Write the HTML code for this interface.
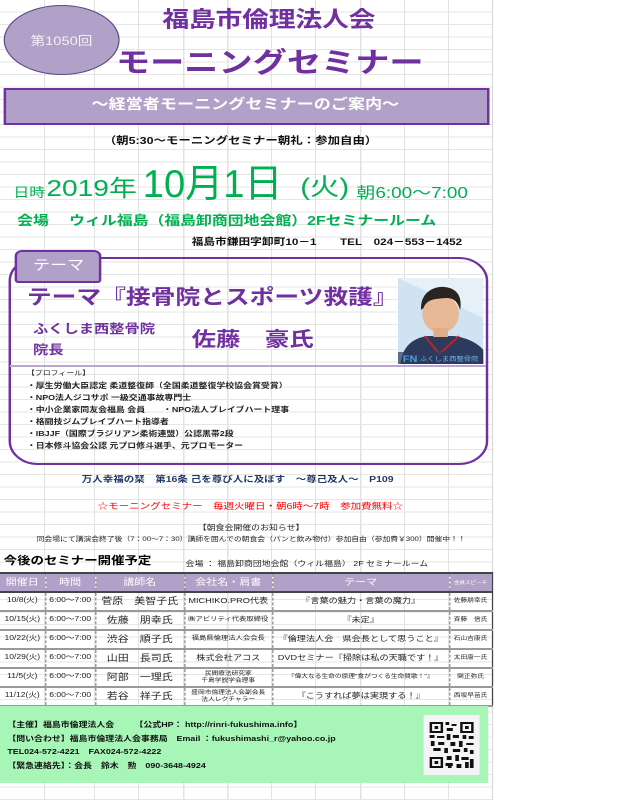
<!DOCTYPE html>
<html><head><meta charset="utf-8">
<style>
html,body{margin:0;padding:0;background:#fff;width:641px;height:800px;overflow:hidden}
#w{position:absolute;left:0;top:0;width:525px;height:800px;transform:scaleX(1.2206);transform-origin:0 0;font-family:"Liberation Sans","Noto Sans CJK JP",sans-serif;}
#grid{position:absolute;left:0;top:0;width:403px;height:800px;border-right:1px solid #d8d8d8;
background-image:
linear-gradient(to right,transparent 36px,#e2e2e2 36px,#e2e2e2 37px,transparent 37px),
linear-gradient(to right,transparent 77px,#e2e2e2 77px,#e2e2e2 78px,transparent 78px),
linear-gradient(to right,transparent 113px,#e2e2e2 113px,#e2e2e2 114px,transparent 114px),
linear-gradient(to right,transparent 150px,#e2e2e2 150px,#e2e2e2 151px,transparent 151px),
linear-gradient(to right,transparent 186px,#e2e2e2 186px,#e2e2e2 187px,transparent 187px),
linear-gradient(to right,transparent 222px,#e2e2e2 222px,#e2e2e2 223px,transparent 223px),
linear-gradient(to right,transparent 258px,#e2e2e2 258px,#e2e2e2 259px,transparent 259px),
linear-gradient(to right,transparent 295px,#e2e2e2 295px,#e2e2e2 296px,transparent 296px),
linear-gradient(to right,transparent 331px,#e2e2e2 331px,#e2e2e2 332px,transparent 332px),
linear-gradient(to right,transparent 367px,#e2e2e2 367px,#e2e2e2 368px,transparent 368px),
repeating-linear-gradient(to bottom,transparent 0,transparent 11.5px,#e6e6e6 11.5px,#e6e6e6 12.5px);}
.a{position:absolute;white-space:nowrap;line-height:1}
.p{color:#7030a0;font-weight:bold}
.g{color:#00b050}
table{position:absolute;left:0;top:572px;width:403px;border-collapse:collapse;table-layout:fixed;font-size:7px;color:#222}
td{border-left:1px dashed #888;text-align:center;padding:0;white-space:nowrap;overflow:hidden;height:17px;border-bottom:2px solid #999;line-height:1.15}
tr.h td{background:#b1a0c7;color:#fff;font-size:9px;height:17px;border-bottom:2px solid #444}
td:first-child{border-left:none}
td:last-child{border-right:1px solid #444}
</style></head><body>
<div id="w">
<div id="grid"></div>

<div style="position:absolute;left:3px;top:5px;width:93px;height:68px;border-radius:50%;background:#b1a0c7;border:1px solid #5c4a85"></div>
<div class="a" style="left:25px;top:35px;font-size:12px;color:#f4f0f8">第1050回</div>

<div class="a p" style="left:133px;top:9px;font-size:22px;letter-spacing:-0.2px">福島市倫理法人会</div>
<div class="a p" style="left:95px;top:49px;font-size:28px">モーニングセミナー</div>

<div style="position:absolute;left:3px;top:88px;width:394px;height:33px;background:#b1a0c7;border:2px solid #7030a0"></div>
<div class="a" style="left:75px;top:97px;font-size:14px;font-weight:bold;color:#fff">～経営者モーニングセミナーのご案内～</div>

<div class="a" style="left:85px;top:137px;font-size:10.2px;font-weight:bold;color:#111">（朝5:30～モーニングセミナー朝礼：参加自由）</div>

<div class="a g" style="left:11px;top:186px;font-size:13px">日時</div>
<div class="a g" style="left:38px;top:177px;font-size:23px">2019年</div>
<div class="a g" style="left:117px;top:165px;font-size:39px;transform:scaleX(0.8);transform-origin:0 0">10月1日</div>
<div class="a g" style="left:246px;top:176px;font-size:24px">(火)</div>
<div class="a g" style="left:292px;top:186px;font-size:15.5px">朝6:00～7:00</div>

<div class="a g" style="left:14px;top:214px;font-size:13px;font-weight:bold">会場　 ウィル福島（福島卸商団地会館）2Fセミナールーム</div>
<div class="a" style="left:157px;top:238px;font-size:9.6px;font-weight:bold;color:#111">福島市鎌田字卸町10－1　　TEL　024－553－1452</div>

<div style="position:absolute;left:7px;top:257px;width:389px;height:204px;border:2px solid #7030a0;border-radius:24px"></div>
<div style="position:absolute;left:12px;top:250px;width:67px;height:29px;background:#b1a0c7;border:2px solid #7030a0;border-radius:6px 6px 3px 3px"></div>
<div class="a" style="left:27px;top:258px;font-size:14px;color:#fff">テーマ</div>

<div class="a p" style="left:22px;top:288px;font-size:20.3px">テーマ『接骨院とスポーツ救護』</div>
<div class="a p" style="left:27px;top:323px;font-size:12.5px;font-weight:600">ふくしま西整骨院</div>
<div class="a p" style="left:27px;top:344px;font-size:12.5px;font-weight:600">院長</div>
<div class="a p" style="left:157px;top:330px;font-size:20px">佐藤　豪氏</div>

<svg style="position:absolute;left:326px;top:278px" width="70" height="86" viewBox="0 0 70 86">
<rect width="70" height="86" fill="#cfe3f2"/>
<path d="M0 0L70 40V0Z" fill="#e6f0f8"/>
<path d="M2 86 C4 66 14 60 24 58 L46 58 C58 60 66 66 70 72 V86Z" fill="#2d3a5e"/>
<path d="M22 58 L34 76 L50 58" fill="none" stroke="#d02020" stroke-width="1.5"/>
<ellipse cx="35" cy="36" rx="15" ry="19" fill="#e8b896"/>
<path d="M19 32 C18 14 30 8 38 9 C48 10 53 18 51 32 C49 24 46 20 40 20 C32 21 24 20 21 30Z" fill="#2a2420"/>
<rect x="29" y="50" width="12" height="9" fill="#e0ad8a"/>
<rect x="0" y="74" width="70" height="12" fill="#2d3a5e" opacity="0.7"/>
<text x="4" y="84" font-size="9" font-weight="bold" fill="#4aa0e0" font-family="Liberation Sans">FN</text>
<text x="18" y="83" font-size="6" fill="#6ab8f0" font-family="Noto Sans CJK JP">ふくしま西整骨院</text>
</svg>

<div style="position:absolute;left:8px;top:365px;width:390px;height:2px;background:#b9a6d4"></div>
<div class="a" style="left:22px;top:371px;font-size:6.5px;color:#222">【プロフィール】</div>
<div style="position:absolute;left:22px;top:380px;font-size:7.3px;font-weight:bold;color:#222;line-height:11.9px;white-space:nowrap">
・厚生労働大臣認定 柔道整復師（全国柔道整復学校協会賞受賞）<br>
・NPO法人ジコサポ 一級交通事故専門士<br>
・中小企業家同友会福島 会員　　・NPO法人ブレイブハート理事<br>
・格闘技ジムブレイブハート指導者<br>
・IBJJF（国際ブラジリアン柔術連盟）公認黒帯2段<br>
・日本修斗協会公認 元プロ修斗選手、元プロモーター</div>

<div class="a" style="left:67px;top:475px;font-size:8.6px;font-weight:bold;color:#203864">万人幸福の栞　第16条 己を尊び人に及ぼす　～尊己及人～　P109</div>
<div class="a" style="left:80px;top:502px;font-size:8.6px;color:#ff0000">☆モーニングセミナー　毎週火曜日・朝6時～7時　参加費無料☆</div>

<div class="a" style="left:162px;top:524px;font-size:7.3px;color:#222">【朝食会開催のお知らせ】</div>
<div class="a" style="left:30px;top:537px;font-size:6.4px;color:#222">同会場にて講演会終了後（7：00～7：30）講師を囲んでの朝食会（パンと飲み物付）参加自由（参加費￥300）開催中！！</div>

<div class="a" style="left:3px;top:556px;font-size:11px;font-weight:bold;color:#000">今後のセミナー開催予定</div>
<div class="a" style="left:152px;top:560px;font-size:7.3px;color:#222">会場 ： 福島卸商団地会館（ウィル福島） 2F セミナールーム</div>

<table>
<colgroup><col style="width:37px"><col style="width:41px"><col style="width:73px"><col style="width:72px"><col style="width:145px"><col style="width:35px"></colgroup>
<tr class="h" style="border-top:2px solid #444"><td>開催日</td><td>時間</td><td>講師名</td><td>会社名・肩書</td><td>テーマ</td><td style="font-size:4.5px">会員スピーチ</td></tr>
<tr><td>10/8(火)</td><td>6:00～7:00</td><td style="font-size:9px">菅原　美智子氏</td><td style="font-size:7.5px">MICHIKO.PRO代表</td><td style="font-size:7.5px">『言葉の魅力・言葉の魔力』</td><td style="font-size:5.5px">佐藤朋幸氏</td></tr>
<tr><td>10/15(火)</td><td>6:00～7:00</td><td style="font-size:9px">佐藤　朋幸氏</td><td style="font-size:6px">㈱アビリティ代表取締役</td><td style="font-size:7.5px">『未定』</td><td style="font-size:5.5px">斉藤　信氏</td></tr>
<tr><td>10/22(火)</td><td>6:00～7:00</td><td style="font-size:9px">渋谷　順子氏</td><td style="font-size:6px">福島県倫理法人会会長</td><td style="font-size:7.5px">『倫理法人会　県会長として思うこと』</td><td style="font-size:5.5px">石山吉康氏</td></tr>
<tr><td>10/29(火)</td><td>6:00～7:00</td><td style="font-size:9px">山田　長司氏</td><td style="font-size:7.5px">株式会社アコス</td><td style="font-size:7.5px">DVDセミナー『掃除は私の天職です！』</td><td style="font-size:5.5px">太田康一氏</td></tr>
<tr><td>11/5(火)</td><td>6:00～7:00</td><td style="font-size:9px">阿部　一理氏</td><td style="font-size:5.5px;line-height:1.25">民間療法研究家<br>千島学説学会理事</td><td style="font-size:5.5px">『偉大なる生命の原理"食がつくる生命賛歌！"』</td><td style="font-size:5.5px">関正弥氏</td></tr>
<tr><td>11/12(火)</td><td>6:00～7:00</td><td style="font-size:9px">若谷　祥子氏</td><td style="font-size:5.5px;line-height:1.25">盛岡市倫理法人会副会長<br>法人レクチャラー</td><td style="font-size:7.5px">『こうすれば夢は実現する！』</td><td style="font-size:5.5px">西坂早苗氏</td></tr>
</table>

<div style="position:absolute;left:0;top:706px;width:400px;height:77px;background:#a8f5b8"></div>
<div style="position:absolute;left:6px;top:718px;font-size:7.3px;font-weight:bold;color:#111;line-height:13.6px;white-space:nowrap">
【主催】福島市倫理法人会　　 【公式HP： http://rinri-fukushima.info】<br>
【問い合わせ】福島市倫理法人会事務局　Email ：fukushimashi_r@yahoo.co.jp<br>
TEL024-572-4221　FAX024-572-4222<br>
【緊急連絡先】：会長　鈴木　勲　090-3648-4924</div>

<svg style="position:absolute;left:347px;top:715px" width="46" height="60" viewBox="0 0 46 60">
<rect width="46" height="60" fill="#f4f4f4"/>
<g fill="#111">
<path d="M5 7h11v11H5zM7 9v7h7V9z" fill-rule="evenodd"/><rect x="9" y="11" width="3" height="3"/>
<path d="M30 7h11v11H30zM32 9v7h7V9z" fill-rule="evenodd"/><rect x="34" y="11" width="3" height="3"/>
<path d="M5 42h11v11H5zM7 44v7h7v-7z" fill-rule="evenodd"/><rect x="9" y="46" width="3" height="3"/>
<rect x="18" y="7" width="3" height="3"/><rect x="23" y="9" width="4" height="2"/><rect x="19" y="13" width="5" height="3"/>
<rect x="5" y="20" width="4" height="3"/><rect x="11" y="21" width="6" height="2"/><rect x="19" y="19" width="3" height="6"/>
<rect x="24" y="20" width="5" height="3"/><rect x="32" y="20" width="3" height="4"/><rect x="37" y="21" width="4" height="3"/>
<rect x="6" y="26" width="3" height="5"/><rect x="12" y="27" width="5" height="3"/><rect x="22" y="27" width="4" height="4"/>
<rect x="29" y="26" width="3" height="6"/><rect x="35" y="28" width="6" height="2"/><rect x="8" y="33" width="6" height="3"/>
<rect x="17" y="33" width="3" height="5"/><rect x="24" y="34" width="6" height="3"/><rect x="33" y="33" width="3" height="4"/>
<rect x="38" y="35" width="3" height="4"/><rect x="19" y="41" width="4" height="4"/><rect x="26" y="40" width="3" height="6"/>
<rect x="31" y="42" width="6" height="3"/><rect x="18" y="48" width="6" height="3"/><rect x="27" y="49" width="4" height="4"/>
<rect x="34" y="47" width="3" height="6"/><rect x="38" y="44" width="3" height="9"/><rect x="20" y="51" width="3" height="2"/>
</g></svg>
</div>
</body></html>
